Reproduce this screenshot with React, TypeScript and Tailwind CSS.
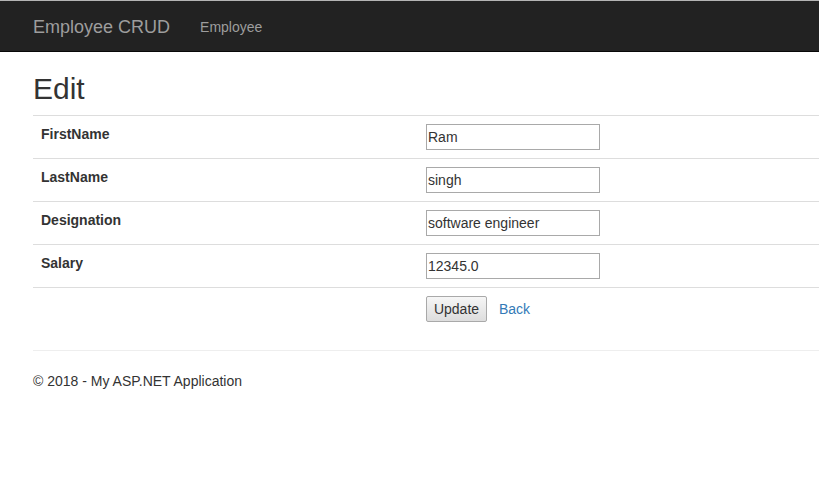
import React from 'react'

const rows = [
  { label: 'FirstName', value: 'Ram' },
  { label: 'LastName', value: 'singh' },
  { label: 'Designation', value: 'software engineer' },
  { label: 'Salary', value: '12345.0' },
]

export default function App() {
  return (
    <div className="min-h-[488px] bg-white font-['Liberation_Sans',Arial,sans-serif] text-[14px] leading-[20px] text-[#333]">
      {/* Navbar */}
      <div className="border-t border-[#b4b4b4] bg-[#222] border-b border-b-[#080808]">
        <div className="flex h-[50px] items-center pl-[33px] pt-[2px]">
          <span className="text-[18px] leading-[20px] text-[#9d9d9d]">Employee CRUD</span>
          <span className="ml-[30px] text-[14px] text-[#9d9d9d]">Employee</span>
        </div>
      </div>

      <div className="pl-[33px]">
        <h2 className="mt-[20px] mb-[10px] text-[30px] leading-[33px] font-normal">Edit</h2>

        <div className="flex flex-col">
          {rows.map((r) => (
            <div key={r.label} className="flex border-t border-[#ddd]">
              <div className="w-[385px] p-[8px] font-bold">{r.label}</div>
              <div className="p-[8px]">
                <input
                  defaultValue={r.value}
                  className="h-[26px] w-[174px] border border-[#a9a9a9] px-[1px] text-[14px] text-[#333] outline-none"
                />
              </div>
            </div>
          ))}
          <div className="flex border-t border-[#ddd]">
            <div className="w-[385px] p-[8px]" />
            <div className="flex items-center p-[8px]">
              <button
                type="button"
                className="h-[26px] w-[61px] rounded-[2px] border border-[#a9a9a9] bg-gradient-to-b from-[#f6f6f6] to-[#dddddd] text-[14px] text-[#333]"
              >
                Update
              </button>
              <a href="#" className="ml-[12px] text-[#337ab7]">Back</a>
            </div>
          </div>
        </div>

        <hr className="mt-[20px] border-t border-[#eee]" />
        <p className="mt-[20px] leading-[20px]">© 2018 - My ASP.NET Application</p>
      </div>
    </div>
  )
}
